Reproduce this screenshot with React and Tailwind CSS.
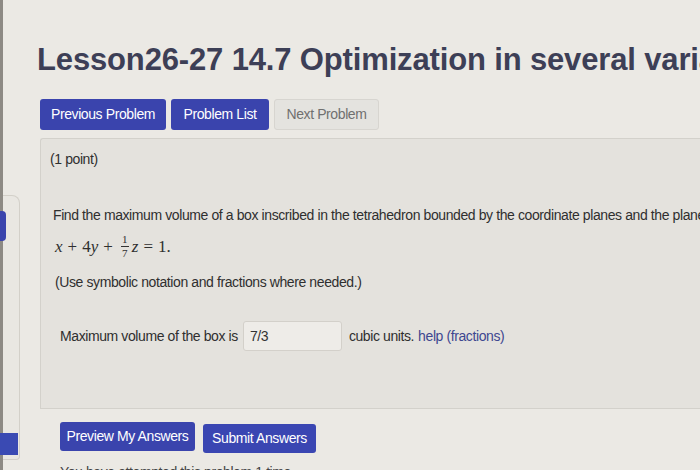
import React from "react";

function Sidebar() {
  return (
    <div className="w-[20px] shrink-0 h-full flex">
      <div className="w-[3px] h-full bg-[#8d8a84] shrink-0" />
      <div className="flex-1 flex flex-col">
        <div className="h-[195px] shrink-0" />
        <div className="relative flex-1 mb-[10px] border-r border-t border-b border-[#d3d0c9] rounded-tr-[8px] rounded-br-[4px] bg-[#e9e7e2]">
          <div className="absolute -left-[3px] top-[15px] w-[6px] h-[30px] bg-[#3a44ad] rounded-r-[4px]" />
          <div className="absolute -left-[3px] top-[237px] w-[18px] h-[22px] bg-[#3a4ab3]" />
        </div>
      </div>
    </div>
  );
}

function Fraction() {
  return (
    <span className="inline-flex flex-col items-center mx-[3px] leading-none text-[11px] relative -top-[1px]">
      <span className="px-[1px]">1</span>
      <span className="w-[8px] h-px bg-[#333] my-[1px]" />
      <span className="px-[1px]">7</span>
    </span>
  );
}

export default function App() {
  return (
    <div
      className="w-[700px] h-[470px] overflow-hidden bg-[#ebe9e4] flex text-[#333] whitespace-nowrap"
      style={{ fontFamily: '"Liberation Sans", Arial, sans-serif' }}
    >
      <Sidebar />
      <main className="flex-1 min-w-0 pl-[17px] pt-[41px]">
        <h1 className="text-[31px] leading-[38px] font-bold tracking-[-0.15px] text-[#3d3f56]">
          Lesson26-27 14.7 Optimization in several variables
        </h1>

        <div className="flex gap-[5px] mt-[20px] ml-[3px] text-[14px] tracking-[-0.4px]">
          <button className="h-[31px] w-[126px] rounded-[3px] bg-[#3a44ad] text-white">
            Previous Problem
          </button>
          <button className="h-[31px] w-[98px] rounded-[3px] bg-[#3a44ad] text-white">
            Problem List
          </button>
          <button className="h-[31px] w-[105px] rounded-[3px] bg-[#e4e3df] border border-[#d7d5d0] text-[#707070]">
            Next Problem
          </button>
        </div>

        <section className="mt-[8px] ml-[3px] h-[271px] bg-[#e4e2dd] border-t border-l border-b border-[#d3d1cb] rounded-tl-[3px] text-[14px] tracking-[-0.4px] text-[#2f2f2f]">
          <p className="pt-[10px] pl-[9px] leading-[20px]">(1 point)</p>
          <p className="mt-[36px] pl-[12px] leading-[20px]">
            Find the maximum volume of a box inscribed in the tetrahedron bounded by the coordinate planes and the plane
          </p>
          <p
            className="mt-[8px] pl-[14px] h-[28px] flex items-center text-[17px] tracking-normal"
            style={{ fontFamily: '"Liberation Serif", "Times New Roman", serif' }}
          >
            <span className="italic">x</span>
            <span className="mx-[5px]">+</span>
            <span>4</span>
            <span className="italic">y</span>
            <span className="mx-[5px]">+</span>
            <Fraction />
            <span className="italic">z</span>
            <span className="mx-[5px]">=</span>
            <span>1.</span>
          </p>
          <p className="mt-[11px] pl-[14px] leading-[20px]">
            (Use symbolic notation and fractions where needed.)
          </p>
          <div className="mt-[29px] pl-[19px] flex items-center">
            <span>Maximum volume of the box is</span>
            <input
              readOnly
              value="7/3"
              className="ml-[5px] w-[99px] h-[30px] px-[6px] bg-[#eeece8] border border-[#d3d0ca] rounded-[3px] text-[14px] text-[#333] outline-none"
            />
            <span className="ml-[7px]">cubic units.</span>
            <span className="ml-[4px] text-[#3e4790]">help (fractions)</span>
          </div>
        </section>

        <div className="mt-[13px] ml-[23px] flex items-start gap-[8px] text-[14px] tracking-[-0.4px]">
          <button className="h-[29px] w-[135px] rounded-[3px] bg-[#3a44ad] text-white">
            Preview My Answers
          </button>
          <button className="mt-[2px] h-[29px] w-[113px] rounded-[3px] bg-[#3a46b2] text-white">
            Submit Answers
          </button>
        </div>
        <p className="mt-[9px] ml-[23px] text-[14px] tracking-[-0.4px] leading-[20px] text-[#444]">
          You have attempted this problem 1 time.
        </p>
      </main>
    </div>
  );
}
